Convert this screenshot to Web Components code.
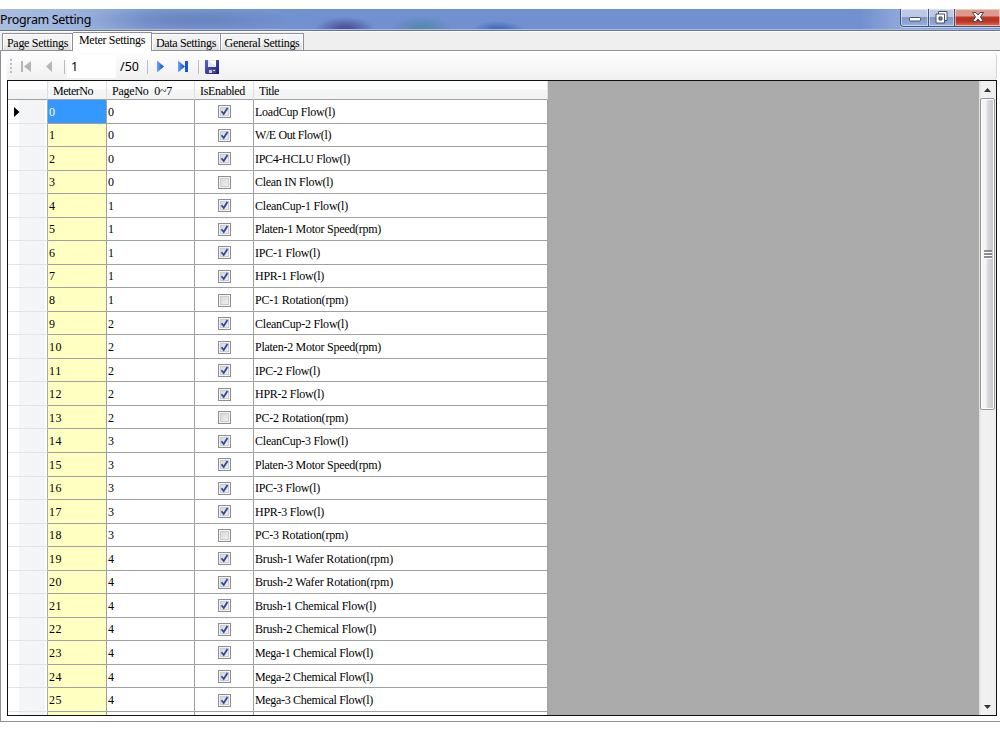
<!DOCTYPE html>
<html lang="en">
<head>
<meta charset="utf-8">
<title>Program Setting</title>
<style>
    body {
        margin: 0;
        background: #fff;
        color: #000;
        font-family: "Liberation Serif", serif;
        font-size: 12px;
    }
</style>
</head>
<body>
<program-window caption="Program Setting">
    <tab-strip slot="tabs">
        <tab-item text-width="61" style="width:71px">Page Settings</tab-item>
        <tab-item text-width="66" style="width:79px" selected>Meter Settings</tab-item>
        <tab-item text-width="60" style="width:69px">Data Settings</tab-item>
        <tab-item text-width="75" style="width:83px">General Settings</tab-item>
    </tab-strip>
    <record-navigator position="1" total="50"></record-navigator>
    <meter-grid></meter-grid>
</program-window>

<script>
// one line of text, letter-spaced to a given width
class FitText extends HTMLElement
{
    constructor() {
        super();
        this.attachShadow({ mode: 'open' });
        // no whitespace around the slot: white-space is pre
        this.shadowRoot.innerHTML = '<style>:host { display: inline-block; flex: none; white-space: pre; line-height: 16px; }</style><slot></slot>';
    }

    connectedCallback()
    {
        this.fit();
    }

    fit()
    {
        const width = parseFloat(this.getAttribute('width'));
        const count = this.textContent.length;
        if (!width || !count)
        {
            return;
        }
        this.style.letterSpacing = '0';
        const natural = this.getBoundingClientRect().width;
        if (natural)
        {
            this.style.letterSpacing = `${(width - natural) / count}px`;
        }
    }
}

class ProgramWindow extends HTMLElement
{
    constructor() {
        super();
        this.attachShadow({ mode: 'open' });
        this.shadowRoot.innerHTML = `
            <style>
                :host {
                    display: flex;
                    flex-direction: column;
                    box-sizing: border-box;
                    width: 1000px;
                    height: 730px;
                    padding-top: 9px;
                    overflow: hidden;
                }
                .caption {
                    display: flex;
                    justify-content: space-between;
                    box-sizing: border-box;
                    height: 22px;
                    flex: none;
                    border-bottom: 1px solid #66758f;
                    box-shadow: inset 0 -1px #a9bee6;
                    background:
                        radial-gradient(ellipse 30px 12px at 345px 20px, rgba(62, 52, 128, .65) 20%, transparent),
                        radial-gradient(ellipse 30px 13px at 422px 20px, rgba(74, 130, 160, .65) 20%, transparent),
                        radial-gradient(ellipse 26px 9px at 498px 21px, rgba(50, 100, 175, .8) 20%, transparent),
                        radial-gradient(ellipse 110px 13px at 190px 11px, rgba(65, 95, 155, .3) 20%, transparent),
                        linear-gradient(90deg, #a9bddf 0, #9db4de 70px, #7f9bd3 150px, #7090d0 320px, #7190d0 860px, #8fa8d9 900px, #7490cd);
                }
                .caption fit-text {
                    font: 12.5px "Noto Sans", sans-serif;
                    line-height: 21px;
                }
                .buttons {
                    display: flex;
                    box-sizing: border-box;
                    width: 100px;
                    height: 18px;
                    border: 1px solid #3f527e;
                    border-top: 0;
                    border-right: 0;
                    border-radius: 0 0 0 4px;
                    box-shadow: 0 1px #c6d4ef;
                    overflow: hidden;
                }
                .button {
                    display: grid;
                    place-items: center;
                    box-sizing: border-box;
                    border-right: 1px solid #3f527e;
                    box-shadow: inset 0 0 0 1px rgba(255, 255, 255, .5);
                    background: linear-gradient(#b9c9e6 45%, #8299c5 50%, #94afdc);
                }
                .minimize { width: 28px; }
                .restore { width: 26px; }
                .restore svg { margin-top: -1px; }
                .close {
                    width: 45px;
                    border: 0;
                    background: linear-gradient(#dd9a8c 40%, #bc3829 48%, #b9301d 70%, #dc7052);
                }
                .close svg { margin-top: -2px; }
                .body {
                    display: flex;
                    flex-direction: column;
                    box-sizing: border-box;
                    height: 671px;
                    padding: 2px 3px 5px 6px;
                    border: 1px solid #8d8f9b;
                    border-width: 0 0 1px 1px;
                    background: #fff;
                }
            </style>
            <div class="caption">
                <fit-text></fit-text>
                <div class="buttons">
                    <div class="button minimize">
                        <svg width="14" height="8" viewBox="0 0 14 8"><rect x="1.5" y="3.5" width="11" height="3.5" rx="1" fill="#fff" stroke="#4b5162"/></svg>
                    </div>
                    <div class="button restore">
                        <svg width="13" height="13" viewBox="0 0 13 13" stroke="#4b5162"><path d="M3.500.5H12V9.500H3.500Z" fill="#fff"/><path d="M1 3H9.500V12H1Z" fill="#fff"/><path d="M4 6H7V9H4Z" fill="#6c82ad"/></svg>
                    </div>
                    <div class="button close">
                        <svg width="14" height="12" viewBox="0 0 14 12"><path d="M1.500 1.500H4.900L7 4 9.100 1.500H12.500L9.500 6 12.500 10.500H9.100L7 8 4.900 10.500H1.500L4.500 6Z" fill="#fff" stroke="#53414c" stroke-linejoin="round"/></svg>
                    </div>
                </div>
            </div>
            <slot name="tabs"></slot>
            <div class="body"><slot></slot></div>
        `;
    }

    connectedCallback()
    {
        const caption = this.shadowRoot.querySelector('.caption fit-text');
        caption.textContent = this.getAttribute('caption');
        caption.setAttribute('width', 91);
        caption.fit();
    }
}

class TabStrip extends HTMLElement
{
    constructor() {
        super();
        this.attachShadow({ mode: 'open' });
        this.shadowRoot.innerHTML = `
            <style>
                :host {
                    display: flex;
                    align-items: flex-end;
                    flex: none;
                    box-sizing: border-box;
                    height: 20px;
                    padding-left: 2px;
                    border-top: 1px solid #fff;
                    box-shadow: inset 0 -1px #8d8f9b;
                    background: #efefef;
                }
            </style>
            <slot></slot>
        `;
    }
}

class TabItem extends HTMLElement
{
    constructor() {
        super();
        this.attachShadow({ mode: 'open' });
        this.shadowRoot.innerHTML = `
            <style>
                :host {
                    display: flex;
                    justify-content: center;
                    flex: none;
                    box-sizing: border-box;
                    height: 18px;
                    border: 1px solid #8d8f9b;
                    border-left-width: 0;
                    box-shadow: inset 1px 1px #fff, inset -1px 0 #fff;
                    background: linear-gradient(#f3f3f3 45%, #dedede);
                }
                :host(:first-child) { border-left-width: 1px; }
                :host([selected]) {
                    height: 19px;
                    border-bottom: 0;
                    background: #fff;
                }
                fit-text { line-height: 18px; }
                :host([selected]) fit-text { line-height: 15px; }
            </style>
            <fit-text></fit-text>
        `;
    }

    connectedCallback()
    {
        const label = this.shadowRoot.querySelector('fit-text');
        label.textContent = this.textContent;
        label.setAttribute('width', this.getAttribute('text-width'));
        label.fit();
    }
}

class RecordNavigator extends HTMLElement
{
    constructor() {
        super();
        this.attachShadow({ mode: 'open' });
        this.shadowRoot.innerHTML = `
            <style>
                :host {
                    display: flex;
                    align-items: center;
                    flex: none;
                    box-sizing: border-box;
                    height: 27px;
                    padding-left: 2px;
                    border-right: 1px solid #d4d4d4;
                    border-radius: 0 4px 3px 0;
                    background: linear-gradient(#fdfdfd, #f0f0f0);
                    font: 12.5px "Noto Sans", sans-serif;
                }
                svg { display: block; flex: none; }
                .position {
                    box-sizing: border-box;
                    width: 49px;
                    height: 23px;
                    padding-left: 4px;
                    line-height: 23px;
                    background: #fff;
                }
                .total { width: 28px; line-height: 23px; padding-left: 4px; box-sizing: border-box; margin-right: 3px; }
            </style>
            <svg width="58" height="27" viewBox="0 0 58 27">
                <path d="M1 6h2v2H1zM1 10h2v2H1zM1 14h2v2H1zM1 18h2v2H1z" fill="#bcbcbc"/>
                <path d="M12 8h2v11h-2zM22 8v11l-7-5.500z" fill="#b5b5b5"/>
                <path d="M43 8v11l-6-5.500z" fill="#b5b5b5"/>
                <path d="M55.500 7v14" stroke="#bdbdbd"/>
            </svg>
            <div class="position"></div>
            <div class="total"></div>
            <svg width="80" height="27" viewBox="0 0 80 27">
                <defs>
                    <linearGradient id="blue" x2="1"><stop stop-color="#68a5fb"/><stop offset="1" stop-color="#0846d5"/></linearGradient>
                    <linearGradient id="disk" x2="1" y2="1"><stop stop-color="#6265d6"/><stop offset="1" stop-color="#171a7c"/></linearGradient>
                </defs>
                <path d="M.5 7v14M51.500 7v14" stroke="#bdbdbd"/>
                <path d="M10 7.500l7 6-7 6z" fill="url(#blue)"/>
                <path d="M31 7.500l7 6-7 6z" fill="url(#blue)"/>
                <path d="M38 8h3v11h-3z" fill="#1753df"/>
                <path d="M58 7h14v14H59l-1-1z" fill="url(#disk)"/>
                <path d="M61 7h8v7h-8z" fill="#e4e7f6"/>
                <path d="M62 8h7v5z" fill="#fff"/>
                <path d="M61 16h8v4h-8z" fill="#4a4e79"/>
                <path d="M62 17h3v3h-3zM66 17h2v1h-2z" fill="#c8cbe0"/>
            </svg>
        `;
    }

    connectedCallback()
    {
        this.shadowRoot.querySelector('.position').textContent = this.getAttribute('position');
        this.shadowRoot.querySelector('.total').textContent = '/' + this.getAttribute('total');
    }
}

class CheckBox extends HTMLElement
{
    constructor() {
        super();
        this.attachShadow({ mode: 'open' });
        this.shadowRoot.innerHTML = `
            <style>
                :host {
                    display: block;
                    box-sizing: border-box;
                    width: 13px;
                    height: 13px;
                    border: 1px solid #8e8f8f;
                    box-shadow: inset 0 0 0 1px #f4f4f4, inset 0 0 0 2px #c9ccd0;
                    background: linear-gradient(135deg, #cfd3d9, #f6f6f6);
                }
                svg { display: none; }
                :host([checked]) svg { display: block; }
            </style>
            <svg width="11" height="11" viewBox="0 0 11 11"><path d="M2.500 5.300L4.700 8 8.500 2" fill="none" stroke="#31479e" stroke-width="1.800"/></svg>
        `;
    }
}

class ScrollBar extends HTMLElement
{
    constructor() {
        super();
        this.attachShadow({ mode: 'open' });
        this.shadowRoot.innerHTML = `
            <style>
                :host {
                    display: flex;
                    flex-direction: column;
                    flex: none;
                    box-sizing: border-box;
                    width: 17px;
                    padding: 0 1px;
                    background: linear-gradient(90deg, #dedede, #f2f2f2 3px, #ededed);
                }
                .arrow { display: grid; place-items: center; height: 17px; flex: none; }
                .thumb {
                    display: grid;
                    place-items: center;
                    box-sizing: border-box;
                    height: 312px;
                    border: 1px solid #979797;
                    border-radius: 2px;
                    box-shadow: inset 0 0 0 1px #fbfbfb;
                    background: linear-gradient(90deg, #f5f5f5 35%, #d7d7db 55%, #c6c7cd);
                }
                .track { flex: 1; }
            </style>
            <div class="arrow"><svg width="7" height="4" viewBox="0 0 7 4"><path d="M0 4L3.500 0 7 4z" fill="#333"/></svg></div>
            <div class="thumb"><svg width="8" height="9" viewBox="0 0 8 9"><path d="M0 1h8M0 4h8M0 7h8" stroke="#707070" stroke-width="1.500"/><path d="M0 2.500h8M0 5.500h8M0 8.500h8" stroke="#fff"/></svg></div>
            <div class="track"></div>
            <div class="arrow"><svg width="7" height="4" viewBox="0 0 7 4"><path d="M0 0h7L3.500 4z" fill="#333"/></svg></div>
        `;
    }
}

// page, enabled, title, title width
const METERS = [
    [0, true, 'LoadCup Flow(l)', 80],
    [0, true, 'W/E Out Flow(l)', 76],
    [0, true, 'IPC4-HCLU Flow(l)', 95],
    [0, false, 'Clean IN Flow(l)', 78],
    [1, true, 'CleanCup-1 Flow(l)', 93],
    [1, true, 'Platen-1 Motor Speed(rpm)', 126],
    [1, true, 'IPC-1 Flow(l)', 65],
    [1, true, 'HPR-1 Flow(l)', 69],
    [1, false, 'PC-1 Rotation(rpm)', 93],
    [2, true, 'CleanCup-2 Flow(l)', 93],
    [2, true, 'Platen-2 Motor Speed(rpm)', 126],
    [2, true, 'IPC-2 Flow(l)', 65],
    [2, true, 'HPR-2 Flow(l)', 69],
    [2, false, 'PC-2 Rotation(rpm)', 93],
    [3, true, 'CleanCup-3 Flow(l)', 93],
    [3, true, 'Platen-3 Motor Speed(rpm)', 126],
    [3, true, 'IPC-3 Flow(l)', 65],
    [3, true, 'HPR-3 Flow(l)', 69],
    [3, false, 'PC-3 Rotation(rpm)', 93],
    [4, true, 'Brush-1 Wafer Rotation(rpm)', 138],
    [4, true, 'Brush-2 Wafer Rotation(rpm)', 138],
    [4, true, 'Brush-1 Chemical Flow(l)', 121],
    [4, true, 'Brush-2 Chemical Flow(l)', 121],
    [4, true, 'Mega-1 Chemical Flow(l)', 118],
    [4, true, 'Mega-2 Chemical Flow(l)', 118],
    [4, true, 'Mega-3 Chemical Flow(l)', 118]
];

class MeterGrid extends HTMLElement
{
    constructor() {
        super();
        this.attachShadow({ mode: 'open' });
        this.shadowRoot.innerHTML = `
            <style>
                :host {
                    display: flex;
                    justify-content: space-between;
                    flex: none;
                    box-sizing: border-box;
                    height: 636px;
                    border: 1px solid #111;
                    overflow: hidden;
                    background: #ababab;
                }
                .table { width: 540px; }
                .row {
                    display: grid;
                    grid-template: 100% / 40px 59px 88px 59px 294px;
                    height: 23.54px;
                }
                .row > div {
                    display: flex;
                    align-items: center;
                    box-sizing: border-box;
                    padding: 1px 0 0 1px;
                    border-right: 1px solid #a0a0a0;
                    border-bottom: 1px solid #a0a0a0;
                    background: #fff;
                }
                .row > .head {
                    padding-left: 6px;
                    border-right-color: #a9a9a9;
                    border-bottom-color: #e3e4e6;
                    background: linear-gradient(90deg, #fff 11px, #f5f6f8 11px, #f3f4f6 37px, #fff 37px);
                }
                .row > .number { background: #ffffc1; }
                .row > .number.selected { background: #3399ff; color: #fff; }
                .row > .check { justify-content: center; padding-left: 0; }
                .header { height: 19px; }
                .header > div, .header > .head {
                    padding-left: 5px;
                    border-right-color: #dedfe1;
                    border-bottom-color: #a0a0a0;
                    background: linear-gradient(#fff 45%, #f4f5f7 50%, #f2f3f5);
                }
            </style>
            <div class="table">
                <div class="row header">
                    <div class="head"></div>
                    <div><fit-text width="40">MeterNo</fit-text></div>
                    <div><fit-text width="60">PageNo  0~7</fit-text></div>
                    <div><fit-text width="45">IsEnabled</fit-text></div>
                    <div><fit-text width="20">Title</fit-text></div>
                </div>
            </div>
            <scroll-bar></scroll-bar>
        `;
    }

    connectedCallback()
    {
        const arrow = '<svg width="6" height="10" viewBox="0 0 6 10"><path d="M0 0l5.500 5L0 10z"/></svg>';
        const rows = METERS.map(([page, enabled, title, width], i) => `
            <div class="row">
                <div class="head">${i === 0 ? arrow : ''}</div>
                <div class="number ${i === 0 ? 'selected' : ''}"><fit-text width="${i > 9 ? 13 : 6.5}">${i}</fit-text></div>
                <div><fit-text>${page}</fit-text></div>
                <div class="check"><check-box ${enabled ? 'checked' : ''}></check-box></div>
                <div><fit-text width="${width}">${title}</fit-text></div>
            </div>
        `).join('');
        // the next row is cut off by the frame
        const rest = '<div class="row"><div class="head"></div><div class="number"></div><div></div><div></div><div></div></div>';
        this.shadowRoot.querySelector('.table').insertAdjacentHTML('beforeend', rows + rest);
    }
}

customElements.define('fit-text', FitText);
customElements.define('program-window', ProgramWindow);
customElements.define('tab-strip', TabStrip);
customElements.define('tab-item', TabItem);
customElements.define('record-navigator', RecordNavigator);
customElements.define('check-box', CheckBox);
customElements.define('scroll-bar', ScrollBar);
customElements.define('meter-grid', MeterGrid);

// header labels are upgraded before their styles apply, so measure them once more
document.querySelector('meter-grid').shadowRoot.querySelectorAll('fit-text').forEach(text => text.fit());
</script>
</body>
</html>
